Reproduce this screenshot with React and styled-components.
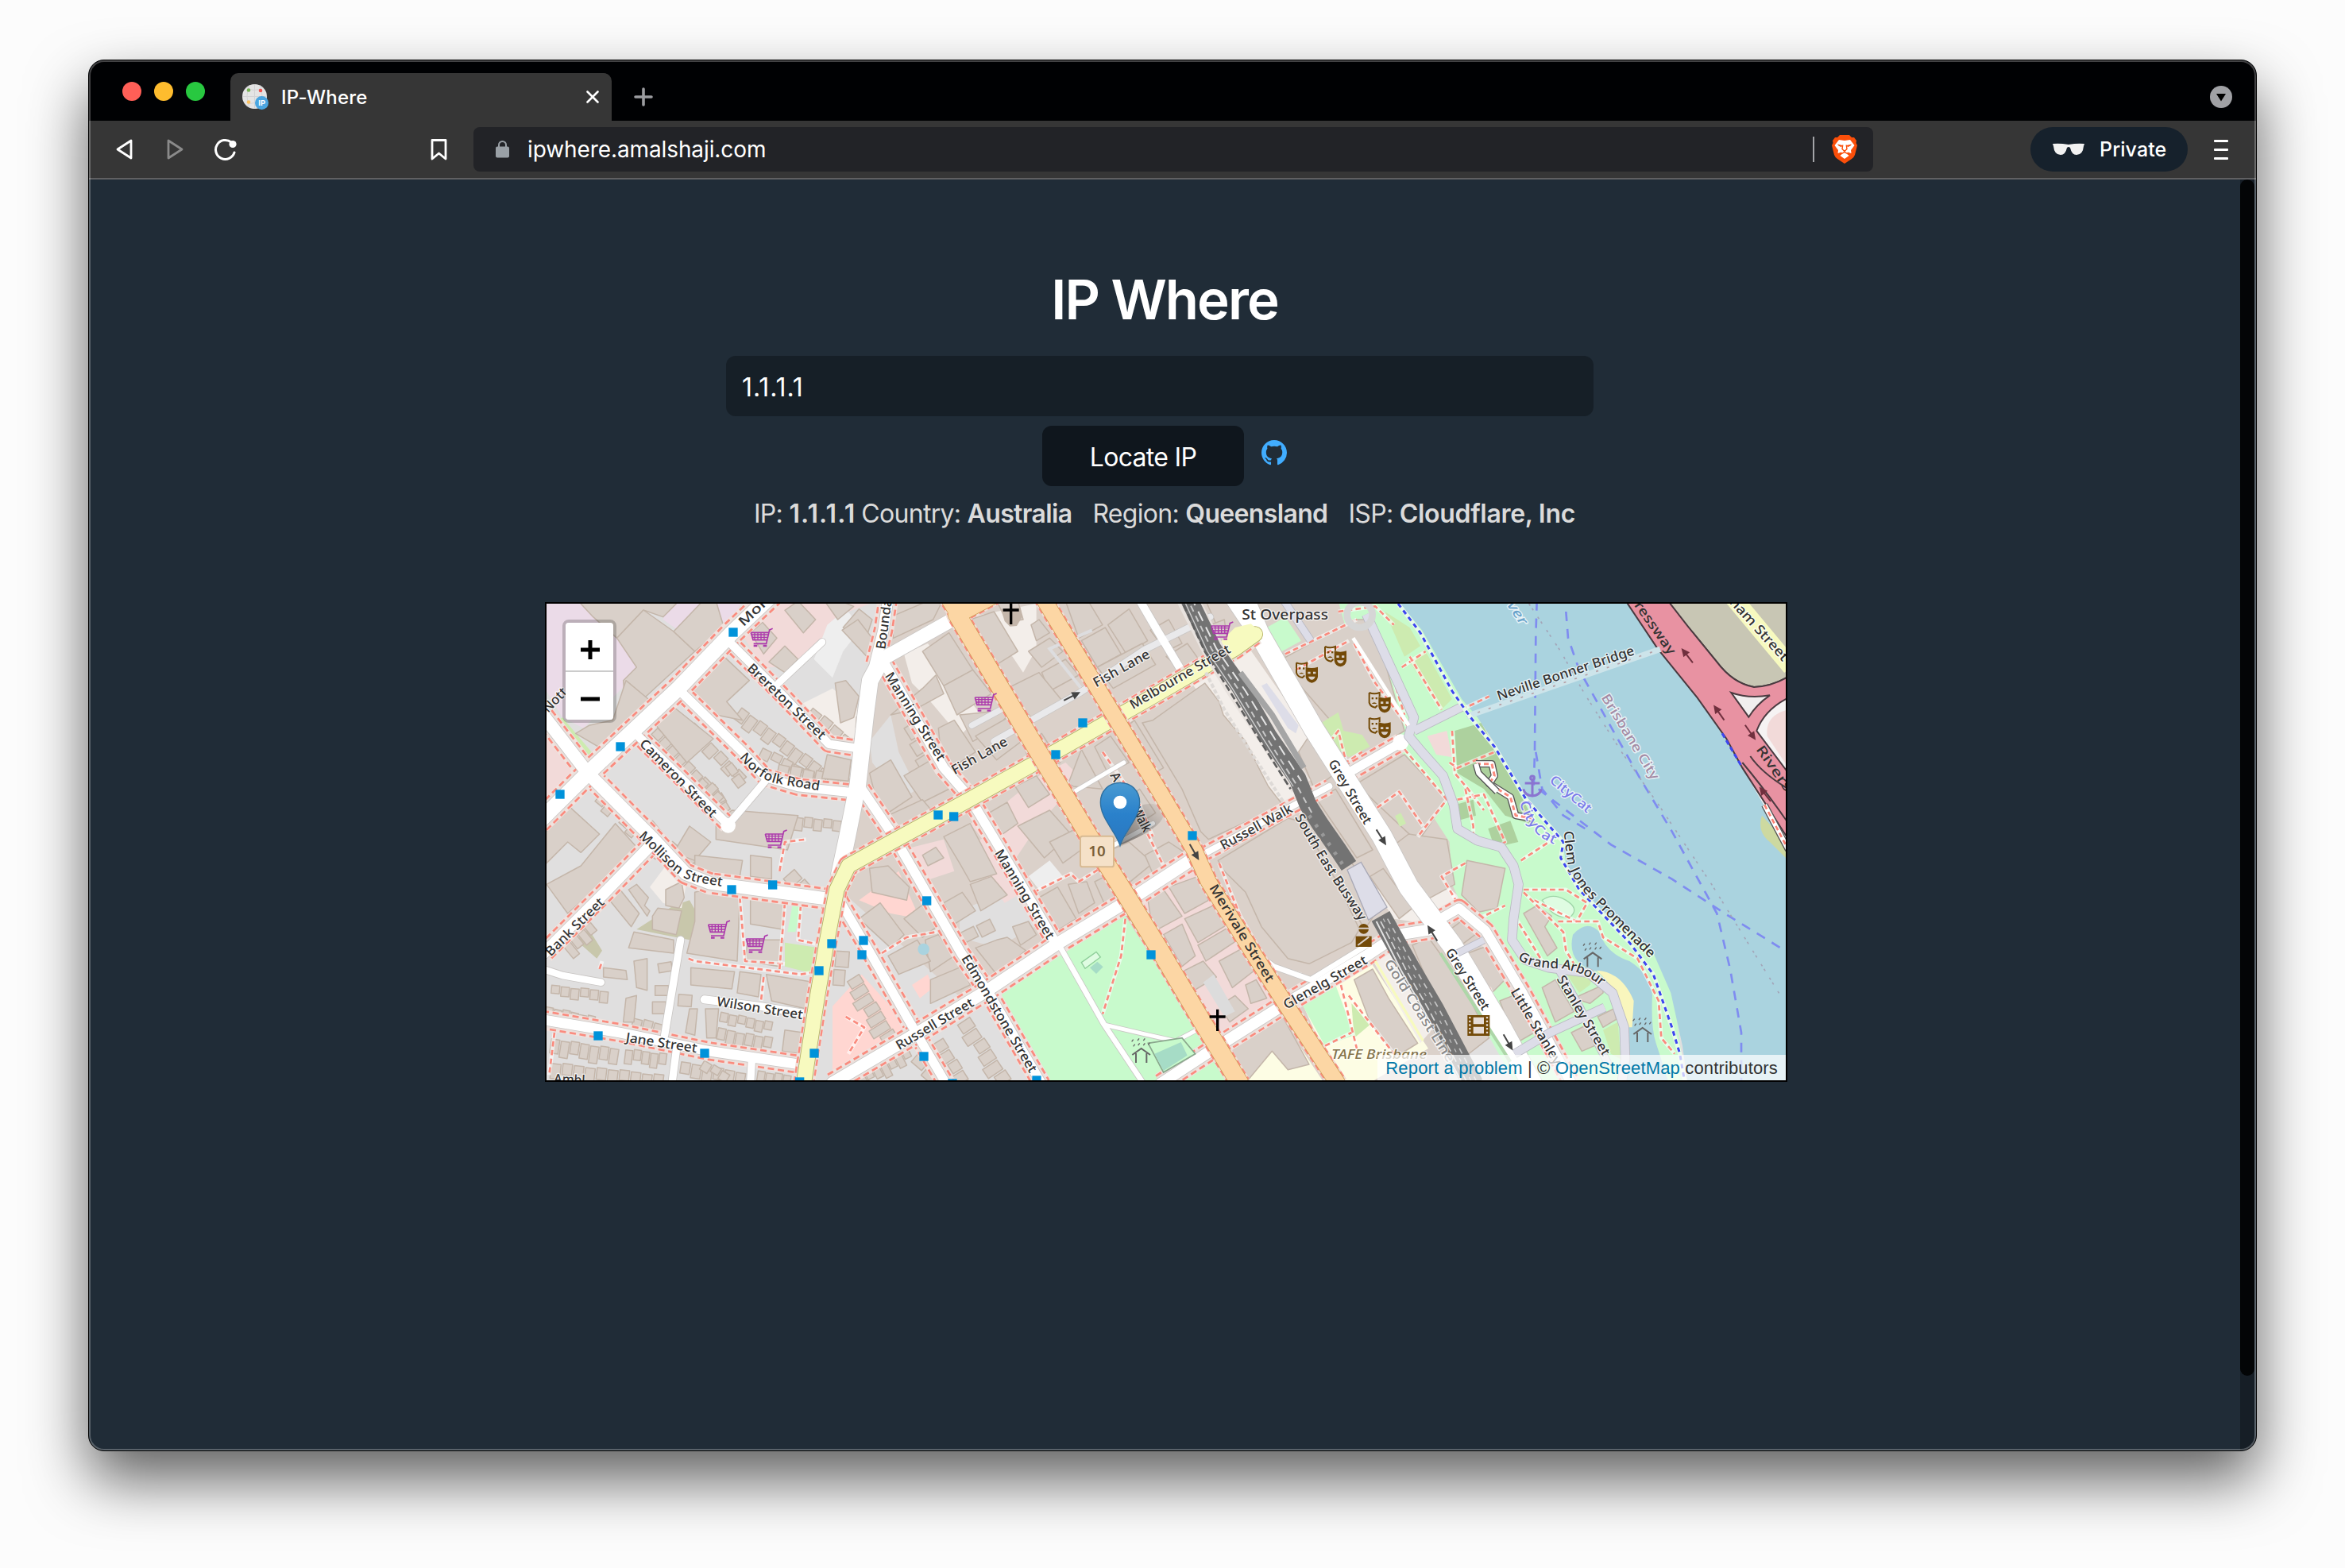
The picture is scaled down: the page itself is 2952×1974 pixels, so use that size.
import React from "react";
import styled, { createGlobalStyle } from "styled-components";

const Global = createGlobalStyle`
  * { box-sizing: border-box; }
  html, body { margin: 0; background: #fcfcfc; }
  body { font-family: Inter, "Liberation Sans", sans-serif; overflow: hidden; }
`;

/* ---------- window chrome ---------- */

const Desktop = styled.div`
  width: 2952px;
  height: 1974px;
  padding: 75px 0 0 111px;
`;

const Window = styled.div`
  position: relative;
  display: flex;
  flex-direction: column;
  width: 2730px;
  height: 1752px;
  border: 1px solid #000;
  border-radius: 20px;
  overflow: hidden;
  background: #202c37;
  box-shadow: 0 36px 76px rgba(0, 0, 0, 0.62);
  &::after {
    content: "";
    position: absolute;
    inset: 0;
    border: 2px solid rgba(255, 255, 255, 0.26);
    border-radius: 19px;
    pointer-events: none;
  }
`;

const TabStrip = styled.div`
  display: flex;
  align-items: flex-end;
  height: 76px;
  padding: 0 30px 0 42px;
  background: #000103;
`;

const Lights = styled.div`
  display: flex;
  gap: 16px;
  width: 136px;
  height: 49px;
`;

const Light = styled.span`
  width: 24px;
  height: 24px;
  border-radius: 50%;
  background: ${(p) => p.$color};
`;

const Tab = styled.div`
  display: flex;
  align-items: center;
  width: 480px;
  height: 60px;
  padding: 0 16px 0 15px;
  border-radius: 10px 10px 0 0;
  background: #363636;
`;

const TabTitle = styled.span`
  flex: 1;
  margin-left: 15px;
  color: #fff;
  font-size: 24px;
  font-weight: 500;
  letter-spacing: 0.25px;
`;

const NewTab = styled.div`
  display: flex;
  align-items: center;
  flex: 1;
  height: 60px;
  padding-left: 28px;
`;

const TabSearch = styled.div`
  display: flex;
  align-items: center;
  height: 60px;
`;

const Toolbar = styled.div`
  display: flex;
  align-items: center;
  height: 74px;
  padding: 0 35px 0 33px;
  border-bottom: 2px solid #606062;
  background: #363636;
`;

const NavButtons = styled.div`
  display: flex;
  align-items: center;
  gap: 37px;
  width: 397px;
`;

const BookmarkSlot = styled.div`
  display: flex;
  width: 54px;
`;

const AddressBar = styled.div`
  display: flex;
  align-items: center;
  width: 1762px;
  height: 56px;
  padding: 0 20px 0 28px;
  border-radius: 8px;
  background: #222327;
`;

const Address = styled.span`
  flex: 1;
  margin-left: 23px;
  color: #fff;
  font-size: 28px;
  letter-spacing: -0.1px;
`;

const AddressDivider = styled.span`
  width: 2px;
  height: 32px;
  margin-right: 22px;
  background: #a3a4a8;
`;

const PrivatePill = styled.div`
  display: flex;
  align-items: center;
  gap: 18px;
  width: 198px;
  height: 56px;
  margin-left: 198px;
  padding-left: 27px;
  border-radius: 28px;
  background: #16212c;
  color: #fff;
  font-size: 25px;
  font-weight: 500;
  letter-spacing: 0.1px;
`;

const Menu = styled.div`
  display: flex;
  flex-direction: column;
  gap: 8px;
  margin-left: 33px;
`;

const MenuBar = styled.span`
  width: 18px;
  height: 3px;
  border-radius: 1px;
  background: #fff;
`;

/* ---------- page ---------- */

const Viewport = styled.div`
  display: flex;
  flex: 1;
`;

const Page = styled.main`
  display: flex;
  flex-direction: column;
  align-items: center;
  width: 2708px;
  padding-top: 110px;
  color: #dbdbdb;
  font-size: 32px;
`;

const ScrollTrack = styled.div`
  width: 18px;
  background: #161e26;
`;

const ScrollThumb = styled.div`
  height: 1506px;
  border-radius: 9px;
  background: #030506;
`;

const Title = styled.h1`
  margin: 0;
  height: 84px;
  line-height: 82px;
  color: #fff;
  font-size: 69px;
  font-weight: 600;
  letter-spacing: -1.95px;
`;

const IpInput = styled.input`
  width: 1092px;
  height: 76px;
  margin: 28px 12px 0 0;
  padding: 2px 20px 0;
  border: 0;
  border-radius: 12px;
  outline: 0;
  background: #161f27;
  color: #fff;
  font: 400 32px Inter, "Liberation Sans", sans-serif;
  letter-spacing: 0.9px;
`;

const Actions = styled.div`
  display: flex;
  gap: 22px;
  margin-top: 12px;
`;

const LocateButton = styled.button`
  width: 254px;
  height: 76px;
  padding: 2px 0 0;
  border: 0;
  border-radius: 12px;
  background: #0f161d;
  color: #fff;
  font: 400 32px Inter, "Liberation Sans", sans-serif;
  letter-spacing: -0.7px;
`;

const RepoLink = styled.a`
  height: 32px;
  margin-top: 18px;
  color: #41adff;
`;

const Facts = styled.p`
  display: flex;
  height: 42px;
  margin: 14px 0 0;
  line-height: 42px;
  white-space: pre;
`;

const Fact = styled.span`
  margin-right: ${(p) => p.$gap || 0}px;
  letter-spacing: -0.7px;
  b { font-weight: 600; letter-spacing: ${(p) => p.$tracking || "-0.65px"}; }
`;

const MapFrame = styled.section`
  position: relative;
  width: 1564px;
  height: 604px;
  margin: 90px 0 0 4px;
  border: 2px solid #000;
  overflow: hidden;
`;

const ZoomControl = styled.div`
  position: absolute;
  left: 20px;
  top: 20px;
  display: flex;
  flex-direction: column;
  width: 68px;
  height: 130px;
  border: 4px solid rgba(0, 0, 0, 0.2);
  border-radius: 8px;
  background-clip: padding-box;
`;

const ZoomButton = styled.button`
  display: flex;
  align-items: center;
  justify-content: center;
  height: ${(p) => (p.$first ? 62 : 60)}px;
  padding: ${(p) => (p.$first ? "8px 0 0 1px" : "0 0 0 1px")};
  border: 0;
  border-bottom: ${(p) => (p.$first ? "2px solid #ccc" : "0")};
  border-radius: ${(p) => (p.$first ? "4px 4px 0 0" : "0 0 4px 4px")};
  background: #fff;
  color: #000;
`;

const Attribution = styled.div`
  position: absolute;
  right: 0;
  bottom: 0;
  height: 32px;
  padding: 0 10px;
  background: rgba(255, 255, 255, 0.7);
  color: #333;
  font-family: "Liberation Sans", Arial, sans-serif;
  font-size: 22px;
  letter-spacing: 0.15px;
  line-height: 33px;
  a { color: #0078a8; text-decoration: none; }
`;

const MapCanvas = styled.svg`
  display: block;
  text { font-family: "Noto Sans", "Open Sans", sans-serif; }
`;

/* ---------- map data: 3 units per screen pixel ---------- */

const STREETS = [
  { p: "506,1270 466,1510 446,1630", w: 28 },
  { p: "491,1680 474,1810", w: 28 },
  { p: "776,1710 770,1810", w: 28 },
  { p: "596,1495 800,1520 1000,1552", w: 30 },
  { p: "-20,1378 60,1404 206,1430", w: 26 },
  { p: "336,490 500,650 686,835", w: 32, walk: 1 },
  { p: "500,325 740,560 826,655 950,692 1190,717", w: 34, walk: 1 },
  { p: "826,670 686,835", w: 28 },
  { p: "686,140 900,355 1066,530 1190,548", w: 32, walk: 1 },
  { p: "876,300 1041,145", w: 26 },
  { p: "1290,-20 1272,100 1240,230", w: 40, walk: 1 },
  { p: "1276,225 1500,620 1596,730 1716,930 1916,1270", w: 36, walk: 1 },
  { p: "1936,1290 2106,1590 2256,1815", w: 20 },
  { p: "2106,1590 2256,1625 2376,1652 2456,1610", w: 15 },
  { p: "1190,700 1306,870 1376,990 1566,1320 1676,1480 1870,1815", w: 36, walk: 1 },
  { p: "1106,1120 1206,1290 1366,1570 1510,1815", w: 34, walk: 1 },
  { p: "386,920 216,1095 -10,1320", w: 42, walk: 1 },
  { p: "-20,1570 276,1620 616,1690 990,1745", w: 38, walk: 1 },
  { p: "1080,1810 1416,1612 1666,1460 1936,1280 2216,1110 2446,960", w: 46, walk: 1 },
  { p: "2446,965 2816,765 2956,690", w: 24, walk: 1 },
  { p: "1976,720 2180,600", w: 16 },
  { p: "2146,910 2256,850 2290,830", w: 16 },
  { p: "1606,460 1756,378", w: 22, c: "#e9e9eb" },
  { p: "1690,520 1796,460 2016,335 2256,175 2506,50", w: 24, c: "#e9e9eb" },
  { p: "2236,-20 2300,90 2390,240", w: 30 },
  { p: "2320,1812 2506,1690 2776,1520 3096,1330 3216,1250 3376,1225", w: 42, walk: 1 },
  { p: "2590,1240 2656,1300 2746,1370 2886,1420 3106,1285", w: 20 },
  { p: "3026,640 3226,525", w: 34, walk: 1 },
  { p: "3376,1190 3446,1150 3546,1235 3686,1470 3870,1810", w: 36, walk: 1 },
  { p: "-10,425 156,640 400,885 526,1020 616,1055 1100,1120", w: 48, walk: 1 },
  { p: "-30,825 156,640 500,318 700,110 880,-60", w: 58, walk: 1 },
  { p: "1720,-50 1516,70 1266,210", w: 52 },
  { p: "1266,210 1222,290 1205,420 1176,680 1136,880 1106,1020", w: 62 },
  { p: "2630,-30 2690,110 2896,470 3156,880 3256,1070 3420,1290 3600,1590 3720,1810", w: 76 },
  { p: "2586,-30 2680,110", w: 60 },
];

const YELLOWS = ["971,1815 1020,1500 1056,1290 1096,1080 1140,990 1266,920 1600,738 1956,540 2316,335 2600,170 2676,115"];
const ORANGES = [
  { p: "1700,-40 1550,40 1816,490 2056,890 2176,1080 2311,1300 2471,1570 2620,1815", w: 66 },
  { p: "1500,-40 1550,40", w: 50 },
  { p: "1870,-30 2136,410 2316,710 2446,930 2500,1050 2656,1300 2796,1520 2990,1815", w: 58 },
];

const LAVENDER = [
  { p: "3096,40 3276,430 3256,500 3306,560 3386,650 3426,760 3440,850 3516,895 3606,920 3652,990 3671,1060 3652,1190 3646,1270 3696,1345 3786,1375 3936,1395 4026,1470 4070,1600 4074,1720 4060,1815", w: 32 },
  { p: "3276,480 3456,390", w: 30 },
  { p: "2786,-10 2886,140", w: 26 },
  { p: "3816,1370 3900,1520 4010,1740", w: 26 },
  { p: "3656,1700 3790,1620 3996,1525", w: 30 },
  { p: "3440,1320 3540,1270", w: 24 },
];

/* rows of houses: x1 y1 x2 y2 count depth */
const HOUSES = [
  [420, 470, 690, 745, 9, 52], [560, 450, 760, 660, 6, 50], [230, 690, 600, 1000, 12, 90],
  [740, 390, 1080, 640, 10, 60], [820, 540, 1060, 660, 6, 44], [880, 600, 1160, 660, 6, 70],
  [20, 1440, 240, 1460, 6, 44], [0, 1520, 190, 1560, 6, 52], [20, 1640, 280, 1680, 7, 66],
  [300, 1680, 460, 1700, 5, 60], [20, 1730, 450, 1780, 10, 60], [510, 1730, 760, 1770, 6, 66],
  [650, 1600, 860, 1640, 6, 60], [660, 1540, 860, 1580, 6, 44], [800, 1760, 930, 1780, 4, 50],
  [330, 1560, 450, 1590, 3, 54], [60, 1290, 170, 1200, 4, 60], [420, 1360, 480, 1350, 1, 50],
  [410, 1440, 470, 1440, 1, 50], [400, 1500, 460, 1500, 1, 56], [500, 1470, 560, 1475, 1, 50],
  [1160, 1760, 1360, 1660, 7, 80], [1180, 1400, 1330, 1640, 7, 80], [1420, 1680, 1560, 1800, 3, 90],
  [1600, 1560, 1760, 1800, 6, 70], [1560, 1240, 1680, 1180, 2, 50], [940, 1000, 1010, 1080, 2, 60],
  [940, 800, 1120, 820, 5, 50], [700, 600, 760, 680, 2, 44], [120, 1110, 180, 1180, 2, 60],
  [1160, 560, 1170, 420, 3, 44], [640, 680, 700, 780, 3, 50], [600, 1720, 700, 1780, 3, 40],
  [1400, 440, 1500, 600, 3, 90], [1080, 1440, 1090, 1300, 2, 60], [1500, 1640, 1600, 1800, 4, 60],
  [640, 760, 560, 680, 3, 44], [1010, 390, 1170, 520, 4, 60],
];

/* larger footprints in the same units */
const BUILDINGS = [
  "120,-10 250,-10 500,-10 440,50 366,24 266,130 176,50", "266,130 366,24 480,105 560,180 300,420 290,290 340,240",
  "300,290 420,390 230,560 110,490 160,460 250,440", "480,105 590,-10 640,-10 670,90 560,180",
  "530,320 660,190 766,290 680,370 740,440 640,420", "410,455 480,390 630,510 530,600",
  "900,25 950,-10 1016,60 970,110", "1120,90 1180,20 1230,60 1200,150", "840,220 900,160 950,210 900,260",
  "770,110 815,70 870,130 820,190", "1050,-10 1110,-10 1160,10 1100,60",
  "0,860 90,770 200,870 130,940 80,900 0,980", "130,990 260,830 350,930 80,1170 0,1060",
  "480,940 540,840 620,900 560,970", "560,950 740,970 730,1030 560,1010", "640,830 700,780 950,800 910,930 640,890",
  "770,950 850,960 850,1040 770,1030", "560,1090 600,1080 730,1110 720,1350 530,1320 560,1200",
  "770,1100 900,1120 890,1230 770,1210", "760,1270 895,1270 880,1370 750,1350",
  "545,1375 710,1390 700,1455 545,1440", "730,1390 810,1400 800,1485 720,1470", "830,1400 1010,1430 980,1530 850,1500",
  "340,880 400,820 450,880 400,920", "230,1110 270,1070 350,1170 320,1220", "310,1080 340,1060 385,1110 370,1140 390,1160 380,1180",
  "400,1180 420,1150 510,1160 490,1250 400,1230", "330,1240 480,1270 480,1320 310,1300", "450,1080 510,1050 520,1110 500,1150 450,1140",
  "330,1350 380,1340 380,1460 340,1450", "215,1375 300,1385 305,1420 215,1410", "300,1490 340,1480 330,1580 290,1580",
  "540,1530 570,1530 560,1630 525,1620", "600,1530 650,1530 640,1640 605,1640", "900,1610 970,1620 960,1700 890,1690",
  "1060,570 1150,590 1140,670 1040,660", "1116,100 1176,60 1230,130 1210,200", "1300,50 1440,-10 1490,0 1460,60 1310,130",
  "1420,180 1520,110 1610,250 1500,310", "1300,420 1420,320 1470,270 1500,340 1390,400", "1500,310 1610,250 1680,340 1550,420",
  "1480,470 1540,440 1620,560 1530,620 1490,580", "1350,650 1470,580 1540,690 1420,750", "1220,640 1300,590 1380,730 1290,790 1240,720",
  "1290,800 1420,740 1470,800 1400,860 1310,850", "1560,420 1610,520 1700,470 1760,400", "1620,500 1760,420 1820,500 1700,590",
  "1600,60 1690,30 1780,180 1700,230", "1700,-10 1780,-10 1800,60 1740,70", "1830,80 1860,60 1900,110 1850,140",
  "1820,180 1900,130 1950,180 1870,240", "1870,260 1960,210 2010,270 1900,330", "1740,320 1860,260 1950,370 1830,430",
  "1960,-10 2040,-20 2100,80 2010,130", "2020,140 2110,90 2170,190 2080,240", "2120,80 2200,20 2270,140 2190,190",
  "2080,240 2250,150 2300,230 2140,320", "1800,530 1870,490 1940,600 1840,640", "1970,680 2020,550 2100,700 1990,690",
  "2070,540 2130,500 2200,600 2120,640", "2160,490 2220,440 2330,620 2260,660", "1770,690 1850,650 1900,720 1820,770",
  "1780,840 1900,780 1980,870 1880,960", "1900,900 2020,840 2060,900 1950,980", "1620,820 1740,750 1780,830 1680,900",
  "1500,880 1600,830 1700,1020 1600,1050 1560,980", "1600,1060 1680,1030 1740,1100 1640,1160", "1420,950 1470,920 1500,960 1440,990",
  "1350,1190 1430,1130 1500,1200 1420,1260", "1500,1130 1570,1090 1620,1160 1540,1210",
  "1180,1190 1260,1130 1350,1250 1300,1300", "1220,1000 1290,990 1370,1070 1360,1120 1230,1090",
  "1430,1270 1480,1250 1540,1330 1450,1390", "1290,1330 1400,1270 1450,1350 1330,1400", "1450,1420 1570,1370 1600,1440 1450,1510",
  "1620,1300 1700,1270 1740,1260 1810,1310 1700,1400", "1760,1220 1820,1200 1850,1250 1790,1290", "1860,1110 1930,1070 2000,1190 1920,1240",
  "1970,1060 2040,1050 2070,1130 2010,1170", "2070,1050 2110,1030 2150,1110 2110,1140", "2130,930 2200,900 2290,980 2180,1070",
  "2260,950 2350,900 2410,940 2290,1020", "2200,730 2240,700 2300,790 2240,830", "2270,1110 2330,1080 2400,1180 2290,1240",
  "2350,1070 2460,1030 2500,1120 2410,1170", "2330,1250 2400,1210 2450,1330 2400,1370", "2410,1190 2540,1130 2590,1200 2460,1280",
  "2400,1390 2480,1350 2530,1410 2430,1470", "2540,1350 2630,1300 2680,1380 2590,1450", "2460,1290 2580,1220 2610,1270 2490,1350",
  "2540,1520 2600,1480 2650,1530 2580,1580", "2640,1440 2680,1420 2720,1490 2660,1510",
  "2290,440 2486,300 2540,370 2556,420 2640,520 2700,640 2726,690 2780,760 2500,890 2470,860 2400,700 2250,450",
  "2536,970 2800,810 2880,830 3070,1230 3040,1280 2880,1360 2800,1340 2700,1220 2640,1090 2560,1010",
  "2850,820 2920,800 3150,1140 3090,1230", "2740,230 3050,60 3120,60 3240,480 3080,580 2960,440 2820,280",
  "2840,560 2880,500 2980,640 2900,700", "2910,740 2980,700 3120,930 3060,960", "3060,680 3240,570 3400,740 3290,900 3130,750",
  "3190,920 3256,870 3400,890 3430,1060 3320,1120", "3110,1030 3160,1000 3270,1150 3220,1190",
  "3270,1290 3330,1260 3460,1440 3560,1640 3470,1710 3400,1600", "3400,1240 3480,1180 3520,1240 3440,1300",
  "2580,1680 2780,1560 2880,1740 2800,1760 2740,1690 2640,1810 2600,1760", "3050,1420 3120,1380 3180,1490 3290,1660 3210,1710 3110,1580",
  "3476,970 3620,1000 3590,1150 3520,1165 3456,1100", "3690,1170 3740,1140 3796,1180 3770,1220 3816,1300 3780,1330",
  "3480,1320 3560,1290 3620,1420 3570,1470", "3600,1500 3650,1480 3730,1620 3660,1660", "3760,1450 3810,1420 3880,1540 3810,1580 3790,1530",
  "3880,1490 3990,1440 3990,1470 3940,1510", "3870,1620 3930,1590 3980,1660 3910,1690", "3970,1560 4030,1530 4040,1570 3990,1600",
  "2280,100 2350,60 2400,150 2340,180", "2440,30 2490,-10 2530,80 2480,100", "2340,200 2420,150 2470,220 2400,250",
  "2480,90 2560,60 2570,140 2520,180", "1090,300 1130,290 1180,350 1160,430 1110,450",
];

const LAND = [
  { c: "#ebdbe8", p: "0,-10 140,-10 370,230 140,470 60,430 0,330" },
  { c: "#ebdbe8", p: "460,-10 740,-10 700,60 540,130 440,60" },
  { c: "#f2dad9", p: "720,90 900,-10 1250,-10 1140,30 1000,200 960,240 820,240" },
  { c: "#eeeeee", p: "1010,210 1060,80 1130,20 1190,90 1120,180 1080,280" },
  { c: "#f3eeea", p: "960,380 1080,320 1180,400 1170,520 1080,500" },
  { c: "#f2dad9", p: "0,470 130,630 0,760" },
  { c: "#cdebb0", p: "60,430 170,560 160,590 40,440" },
  { c: "#f3eeea", p: "1350,190 1440,150 1640,420 1560,500 1450,370 1380,300" },
  { c: "#f3eeea", p: "1600,50 1850,0 1850,170 1800,260 1760,200" },
  { c: "#e0dfdf", p: "1220,520 1300,420 1330,560 1400,700 1340,740 1230,600" },
  { c: "#f2dad9", p: "1700,780 1860,650 1960,600 2060,700 1990,690 1860,830 1740,1010 1600,830" },
  { c: "#e0dfdf", p: "1560,1160 1800,1060 1880,1200 1700,1300 1560,1260" },
  { c: "#f3eeea", p: "2400,250 2620,120 2900,520 2850,600 2860,800 2740,720" },
  { c: "#c8c7ab", p: "340,1230 480,1140 540,1120 580,1190 540,1270 440,1250" },
  { c: "#c8c7ab", p: "110,1270 160,1230 210,1310 190,1340" },
  { c: "#f3eeea", p: "390,1070 450,990 530,1050 510,1150 440,1130" },
  { c: "#cdebb0", p: "900,1280 1030,1300 1020,1400 900,1370" },
  { c: "#c8facc", p: "930,1130 970,1130 940,1240 910,1240" },
  { c: "#ffd6d1", p: "1180,1120 1330,1010 1410,1190 1300,1170" },
  { c: "#f2dad9", p: "1380,920 1500,890 1540,1010 1420,1050" },
  { c: "#f2dad9", p: "1580,920 1660,880 1800,1090 1730,1130 1640,1010" },
  { c: "#eeeeee", p: "1820,1030 1900,970 1950,1030 1860,1080" },
  { c: "#ffd6d1", p: "1080,1520 1190,1400 1370,1600 1080,1790" },
  { c: "#ffd6d1", p: "1380,1440 1440,1400 1460,1450 1410,1490" },
  { c: "#c8facc", p: "1706,1475 1940,1320 2186,1180 2590,1815 1900,1815" },
  { c: "#f2dad9", p: "2256,1060 2450,980 2780,1500 2510,1650 2256,1230" },
  { c: "#fdfde4", p: "2560,1690 2770,1560 2940,1815 2640,1815" },
  { c: "#fdfde4", p: "2850,1500 3110,1350 3330,1680 3100,1815 2990,1815" },
  { c: "#c8facc", p: "2846,1500 2976,1430 3050,1630 2940,1670" },
  { c: "#cdebb0", p: "3040,1510 3110,1590 3050,1640" },
  { c: "#f3eeea", p: "3110,1330 3190,1290 3360,1590 3300,1660" },
  { c: "#f3eeea", p: "3130,1080 3370,1040 3450,1110 3330,1210 3200,1190" },
  { c: "#c8facc", p: "2720,90 2790,50 2850,140 2760,190" },
  { c: "#c8facc", p: "2990,-10 3220,-10 3310,90 3516,430 3660,660 3740,790 3846,910 3850,990 3960,1140 4176,1310 4256,1470 4300,1815 3660,1815 3540,1600 3470,1420 3560,1280 3470,1170 3420,1060 3410,900 3300,730 3230,560 3040,170" },
  { c: "#cdebb0", p: "3166,30 3260,90 3300,160 3240,200" },
  { c: "#cdebb0", p: "3260,220 3320,180 3420,360 3380,400" },
  { c: "#add19e", p: "3430,480 3530,450 3656,680 3740,840 3620,800 3540,700 3440,640" },
  { c: "#add19e", p: "3430,760 3500,740 3510,800 3440,820" },
  { c: "#add19e", p: "3556,850 3640,820 3670,900 3580,920" },
  { c: "#cdebb0", p: "3840,1380 3960,1390 3940,1440 3900,1470" },
  { c: "#cdebb0", p: "3990,1610 4046,1580 4056,1720 4020,1700" },
  { c: "#f2dad9", p: "3326,500 3400,480 3420,580 3360,570" },
];

const FOOTPATHS = [
  "730,1110 750,1350 900,1360", "536,1340 560,1350 960,1400 1020,1390", "900,1130 880,1380", "960,1140 950,1270 1040,1290",
  "820,1410 810,1500", "880,1010 900,900 980,890", "2186,1190 2170,1330 2100,1550", "1266,1320 1360,1260 1470,1240 1510,1210",
  "1840,1090 1980,1020 2010,1050 2090,1000", "2100,560 2240,760 2290,880", "2270,870 2330,990",
  "2540,980 2620,1180 2730,1370 2850,1400", "3000,1440 3060,1680", "3030,1480 3200,1700", "2940,1670 3040,1620",
  "2790,190 3060,60", "2830,250 3030,140", "2990,30 3130,10 3200,80", "3160,160 3240,420", "3230,240 3320,180",
  "3260,200 3380,400", "3050,150 3130,300 3250,460", "3240,550 3400,740 3290,880", "3110,790 3220,710 3310,840",
  "3420,480 3430,640 3480,700 3540,780", "3410,600 3440,620 3580,560", "3440,740 3540,720 3620,900 3590,920",
  "3690,1080 3850,1080 3930,1130 3890,1200 3730,1120", "3690,1090 3840,1240 3850,1310 3880,1360", "3656,1180 3760,1350",
  "3820,1200 3970,1200 3990,1260 4120,1340 4200,1500 4210,1640 4260,1700", "3680,970 3800,890", "3470,980 3380,1030 3440,1130",
  "3520,1190 3620,1140", "3560,1450 3620,1590", "3470,700 3500,840 3500,880", "2960,520 2990,480 3020,600 3080,560",
  "3456,400 3560,350", "1130,1560 1200,1600 1140,1700", "200,1380 210,1350", "30,1620 10,1780", "150,640 60,560 40,480",
];

const FERRY = ["3740,-10 3736,120 3732,560 3728,700", "3850,30 3858,130 3900,250 4000,430 4130,660 4250,860 4420,1170 4470,1380 4512,1620 4512,1815", "3746,700 4020,910 4250,1040 4450,1170 4660,1300", "3736,560 3760,700 3840,800 3940,860"];
const RIVERWALK = "3216,0 3300,110 3420,330 3490,430 3580,540 3700,740 3840,900 3830,960 3900,1080 4090,1280 4180,1400 4250,1600 4280,1700 4300,1815";

const LABELS = [
  ["Mon", "M732 76 L838 -24"], ["Brereton Street", "M766 235 L1050 506"], ["Cameron Street", "M361 520 L638 802"],
  ["Norfolk Road", "M741 570 Q800 645 870 662 L1036 690"], ["Nott", "M-6 402 L72 322"],
  ["Mollison Street", "M358 868 L470 976 Q520 1030 590 1038 L668 1052"], ["Bounda", "M1262 172 L1288 -22"],
  ["Manning Street", "M1291 263 L1496 592"], ["Manning Street", "M1706 932 L1908 1266"],
  ["Fish Lane", "M1533 632 L1740 514"], ["Fish Lane", "M2068 302 L2278 184"], ["Melbourne Street", "M2206 385 L2582 165"],
  ["St Overpass", "M2626 42 L2956 42"], ["Grey Street", "M2966 592 L3106 832"], ["Grey Street", "M3408 1306 L3552 1534"],
  ["Russell Walk", "M2548 916 L2816 768"], ["South East Busway", "M2840 798 L2950 986 L3088 1194"],
  ["Merivale Street", "M2516 1064 L2738 1428"], ["Glenelg Street", "M2786 1518 L3098 1340"],
  ["Edmondstone Street", "M1580 1330 L1842 1770"], ["Russell Street", "M1323 1672 L1612 1500"],
  ["Bank Street", "M4 1322 L212 1116"], ["Wilson Street", "M644 1502 L972 1554"], ["Jane Street", "M300 1638 L572 1680"],
  ["Ambl", "M28 1794 L150 1800"], ["Gold Coast Line", "M3176 1348 L3420 1730", "#8a8a8a"],
  ["TAFE Brisbane", "M2964 1702 L3328 1702", "#84744c", 1], ["Grand Arbour", "M3676 1326 Q3716 1362 3830 1360 Q3930 1376 3996 1434"],
  ["Little Stanley", "M3654 1456 L3824 1740"], ["Stanley Street", "M3828 1408 L4006 1706"],
  ["Clem Jones Promenade", "M3858 858 L3872 970 Q3896 1050 3966 1114 L4182 1330"],
  ["CityCat", "M3796 658 L3944 782", "#7b7bea"], ["CityCat", "M3692 745 Q3720 860 3816 894", "#7b7bea"],
  ["Neville Bonner Bridge", "M3591 350 L4110 174"], ["Brisbane City", "M3996 345 L4192 664", "#a48ca5"],
  ["ver", "M3640 -4 L3696 78", "#6aa3cb", 1], ["ressway", "M4120 -4 L4256 190"], ["ham Street", "M4478 -16 L4684 212"],
  ["Riversi", "M4580 540 L4706 722"], ["A", "M2142 640 L2160 672"], ["Walk", "M2226 772 L2272 862"],
];

const STOPS = [[705, 108], [279, 540], [51, 720], [2025, 450], [1923, 570], [1479, 798], [1538, 804], [2439, 876], [699, 1080], [854, 1062], [1077, 1284], [1029, 1386], [195, 1632], [597, 1698], [1011, 1698], [956, 1806], [1436, 1122], [1197, 1272], [1191, 1326], [1425, 1710], [1533, 1812], [1851, 1800], [2283, 1326]];
const CARTS = [[812, 127], [866, 888], [1658, 372], [2551, 102], [651, 1230], [794, 1284]];
const MASKS = [[2979, 198], [2871, 259], [3146, 372], [3146, 468]];
const ARROWS = [[1984, 350, -27], [3152, 882, 58], [2446, 938, 60], [3346, 1245, -122], [3631, 1656, 60], [4308, 196, -128], [4428, 412, -125], [4546, 486, 55], [4602, 720, -128]];

const houseRow = ([x1, y1, x2, y2, n, depth], r) => {
  const dx = (x2 - x1) / n, dy = (y2 - y1) / n, len = Math.hypot(dx, dy);
  const nx = -dy / len, ny = dx / len;
  return Array.from({ length: n }, (_, i) => {
    const a = ((i * 37 + r * 13) % 11) / 11, d = depth * (0.65 + a * 0.35), s = a * 8;
    const ax = x1 + dx * i + nx * s, ay = y1 + dy * i + ny * s;
    const bx = ax + dx * 0.84, by = ay + dy * 0.84;
    return `${ax},${ay} ${bx},${by} ${bx + nx * d},${by + ny * d} ${ax + nx * d},${ay + ny * d}`;
  });
};

const pathLength = (d) => {
  const el = document.createElementNS("http://www.w3.org/2000/svg", "path");
  el.setAttribute("d", d);
  return el.getTotalLength();
};

const Cart = ({ x, y }) => (
  <g transform={`translate(${x - 42} ${y - 36})`} fill="none" stroke="#ac39ac" strokeWidth="5">
    <path d="M84 3 L72 8 L60 60 H12 M2 18 L10 46 H62 M2 18 H70" />
    <path d="M4 26 H68 M6 36 H66 M16 18 V46 M28 18 V46 M40 18 V46 M52 18 V46" strokeWidth="4" />
    <path d="M12 68 H26 M48 68 H62" strokeWidth="7" />
  </g>
);

const Mask = ({ x, y }) => (
  <g transform={`translate(${x - 42} ${y - 40})`} fill="#734a08">
    <path d="M3 4 Q22 12 42 4 V20 M3 4 V42 Q8 58 26 60 L34 52" fill="none" stroke="#734a08" strokeWidth="6" />
    <rect x="12" y="22" width="7" height="7" /><rect x="27" y="22" width="7" height="7" /><path d="M12 46 q10 -10 20 0z" />
    <path d="M38 20 Q60 28 84 20 V58 Q80 78 61 80 Q42 78 38 58Z" />
    <path d="M46 38 H56 V46 H46Z M66 38 H76 V46 H66Z M48 56 H74 Q70 68 61 68 Q52 68 48 56Z" fill="#d9d0c9" />
  </g>
);

const Shelter = ({ x, y }) => (
  <g transform={`translate(${x} ${y})`} fill="none" stroke="#666" strokeWidth="6">
    <path d="M-34 2 L0 -22 L34 2 M-20 -4 V32 M20 -4 V32" />
    <path d="M-30 -30 l6 -8 M-12 -34 l6 -8 M8 -34 l6 -8 M26 -36 l6 -8 M-36 -48 l6 -8 M-14 -52 l6 -8 M8 -52 l6 -8" strokeWidth="4" />
  </g>
);

const Line = ({ p, ...rest }) => <polyline points={p} fill="none" strokeLinejoin="round" {...rest} />;

function CityMap() {
  return (
    <MapCanvas width="1560" height="600" viewBox="0 0 4680 1800">
      <defs>
        <linearGradient id="pin" x1="0" y1="0" x2="0" y2="1">
          <stop offset="0" stopColor="#4a9bd2" /><stop offset="0.5" stopColor="#2a81cb" /><stop offset="1" stopColor="#2a77bf" />
        </linearGradient>
        <linearGradient id="shade" x1="0" y1="1" x2="1" y2="0">
          <stop offset="0" stopColor="#000" stopOpacity="0.6" /><stop offset="1" stopColor="#000" stopOpacity="0" />
        </linearGradient>
        {LABELS.map(([, d], i) => <path key={i} id={`label-${i}`} d={d} />)}
      </defs>
      <rect width="4680" height="1800" fill="#e0dfdf" />
      <polygon points="1250,0 3000,0 3560,1180 3400,1815 2500,1815 1960,1290 1600,1520 1130,1100 1250,230" fill="#dbd1ca" />
      {LAND.map((a, i) => <polygon key={i} points={a.p} fill={a.c} />)}
      <g fill="#d9d0c9" stroke="#c4b6aa" strokeWidth="4.5" strokeLinejoin="round">
        {HOUSES.flatMap(houseRow).map((p, i) => <polygon key={i} points={p} />)}
        {BUILDINGS.map((p, i) => <polygon key={i} points={p} />)}
      </g>
      <g fill="#cdebb0">
        <polygon points="2926,450 2990,410 3010,480 3080,495 3110,540 3030,580 2980,540" />
        <polygon points="3204,802 3226,790 3246,830 3222,842" />
      </g>
      <polyline points="2020,320 1900,170 2060,100" fill="none" stroke="#dddddf" strokeWidth="12" />
      <polygon points="2480,1430 2520,1400 2600,1540 2560,1560" fill="#dcdcdc" />
      <circle cx="1424" cy="1305" r="22" fill="#aad3df" />

      <path d="M3216 -10 L3306 100 L3456 360 L3516 430 L3576 520 L3656 660 L3746 800 L3836 890 L3852 990 L3966 1140 L4176 1310 L4246 1470 L4290 1670 L4310 1815 H4700 V-10Z" fill="#aad3df" />
      <path d="M3876 1250 Q3930 1190 3976 1240 Q4000 1320 4090 1350 Q4170 1400 4176 1480 Q4170 1600 4190 1660 L4240 1815 H4080 V1600 Q4060 1480 3970 1390 Q3850 1360 3876 1250Z" fill="#aad3df" />
      <path d="M3966 1385 Q4060 1390 4106 1500 L4100 1600 H4076 Q4060 1470 3966 1385Z" fill="#f9f6bd" />
      <path d="M3760 1120 q40 -30 90 0 q50 30 20 60 q-60 20 -110 -60z" fill="#dffce2" stroke="#9fd6a8" strokeWidth="4" />
      <path d="M4076 -10 L4196 170 L4356 360 L4456 510 L4516 620 L4690 920 V-10Z" fill="#f6f3f3" />
      <path d="M4230 -10 Q4270 60 4330 110 L4420 220 Q4480 300 4560 315 Q4630 312 4690 275 V-10Z" fill="#c8c6b4" stroke="#444" strokeWidth="6" />
      <Line p="4450,-60 4700,240" stroke="#f7fabf" strokeWidth="66" />
      <path d="M4690 400 Q4600 420 4610 500 L4690 620Z" fill="#f2dad9" />
      <g stroke="#4a3a40" strokeWidth="6" fill="#e892a2">
        <path d="M4076 -10 L4196 170 L4346 355 L4456 510 L4516 620 L4690 890 V640 L4570 480 Q4600 400 4690 355 V275 Q4630 312 4560 315 Q4480 300 4420 220 L4310 85 L4236 -10Z" />
        <path d="M4474 336 Q4540 360 4620 346 Q4570 380 4540 428Z" fill="#f1eeee" />
        <path d="M4546 576 Q4590 640 4690 700" fill="none" />
        <path d="M4516 600 Q4600 700 4690 830" fill="none" />
      </g>
      <path d="M4590 800 Q4570 860 4620 900 L4680 960 V900Z" fill="#cdd9a0" />
      <Line p="4600,760 4690,930" stroke="#555" strokeWidth="26" />
      <Line p="4600,760 4690,930" stroke="#fff" strokeWidth="18" />
      <Line p="4600,760 4690,930" stroke="#fa8072" strokeWidth="8" strokeDasharray="18 12" />
      <Line p="4440,490 4512,612" stroke="#3d46f0" strokeWidth="9" strokeDasharray="18 12" />

      {FOOTPATHS.map((p, i) => (
        <g key={i}>
          <Line p={p} stroke="#fff" strokeOpacity="0.6" strokeWidth="15" />
          <Line p={p} stroke="#fa8b7e" strokeWidth="8" strokeDasharray="20 13" />
        </g>
      ))}
      {STREETS.filter((s) => s.walk).map((s, i) => (
        <g key={i}>
          <Line p={s.p} stroke="#f0e2de" strokeWidth={s.w + 40} />
          <Line p={s.p} stroke="#fa8b7e" strokeWidth={s.w + 34} strokeDasharray="24 14" />
          <Line p={s.p} stroke="#ebe0dc" strokeWidth={s.w + 18} />
        </g>
      ))}
      {STREETS.map((s, i) => <Line key={i} p={s.p} stroke="#c9c6c4" strokeWidth={s.w + 5} strokeLinecap="round" />)}
      <circle cx="686" cy="838" r="28" fill="#fff" /><circle cx="3226" cy="523" r="30" fill="#fff" />
      {STREETS.map((s, i) => <Line key={i} p={s.p} stroke={s.c || "#fff"} strokeWidth={s.w} strokeLinecap="round" />)}

      {LAVENDER.map((s, i) => <Line key={i} p={s.p} stroke="#b9b9c2" strokeWidth={s.w + 5} />)}
      {LAVENDER.map((s, i) => <Line key={i} p={s.p} stroke="#dddde8" strokeWidth={s.w} />)}
      <Line p="3046,130 3256,460" stroke="#fff" strokeWidth="14" />
      <circle cx="3071" cy="42" r="48" fill="none" stroke="#d6d6d6" strokeWidth="26" />
      <Line p="3376,1320 3640,1730" stroke="#add7a8" strokeWidth="12" />
      <polygon points="2700,310 2720,300 2840,460 2830,490 2800,470" fill="#dddde8" />

      {YELLOWS.map((p) => (
        <g key={p}>
          <Line p={p} stroke="#efe2dc" strokeWidth="84" />
          <Line p={p} stroke="#fa8b7e" strokeWidth="80" strokeDasharray="24 14" />
          <Line p={p} stroke="#e9ded8" strokeWidth="66" />
          <Line p={p} stroke="#b3ae62" strokeWidth="60" strokeLinecap="round" />
          <Line p={p} stroke="#f7fabf" strokeWidth="55" strokeLinecap="round" />
        </g>
      ))}
      <polygon points="2520,170 2600,90 2660,76 2700,110 2650,150" fill="#f7fabf" />
      {ORANGES.map((o) => <Line key={o.p} p={o.p} stroke="#f1dcd5" strokeWidth={o.w + 16} />)}
      {ORANGES.map((o) => <Line key={o.p} p={o.p} stroke="#fa8b7e" strokeWidth={o.w + 14} strokeDasharray="22 14" />)}
      {ORANGES.map((o) => <Line key={o.p} p={o.p} stroke="#c99a50" strokeWidth={o.w + 4} />)}
      {ORANGES.map((o) => <Line key={o.p} p={o.p} stroke="#fcd6a4" strokeWidth={o.w} />)}

      <g>
        <Line p="2415,-30 2516,170 2600,310 2726,500 2850,690" stroke="#e8e2de" strokeWidth="84" />
        <Line p="2420,-30 2516,170 2616,310 2726,500 2836,660 2876,760 2920,830 2990,930 3030,990" stroke="#737373" strokeWidth="66" />
        <Line p="2400,-30 2496,180 2590,320 2700,500 2820,690" stroke="#d0d0d0" strokeWidth="4" />
        <Line p="2432,-30 2530,170 2640,330 2750,510 2850,670" stroke="#e4e4e4" strokeWidth="6" strokeDasharray="40 26" />
        <Line p="2415,-30 2512,172 2610,320 2716,500 2830,680 2890,790" stroke="#c8c8c8" strokeWidth="6" strokeDasharray="24 18" />
        <Line p="2390,-30 2486,180 2580,330 2690,510 2810,700" stroke="#5f5f5f" strokeWidth="8" strokeDasharray="26 12" />
        <Line p="2620,260 2740,420 2860,620" stroke="#a5a5a5" strokeWidth="22" />
        <Line p="2880,800 2930,870 3010,990" stroke="#999" strokeWidth="14" strokeDasharray="12 30" />
        <Line p="3150,1180 3256,1370 3350,1530 3500,1815" stroke="#737373" strokeWidth="78" />
        <Line p="3150,1200 3250,1390 3330,1530 3480,1815" stroke="#d4d4d4" strokeWidth="5" strokeDasharray="30 14" />
        <Line p="3176,1190 3276,1370 3370,1530 3510,1800" stroke="#c4c4c4" strokeWidth="5" strokeDasharray="22 18" />
        <Line p="3160,1190 3262,1380 3350,1530 3496,1810" stroke="#bdbdbd" strokeWidth="4" strokeDasharray="14 26" />
        <Line p="3134,1200 3230,1390 3310,1530 3460,1815" stroke="#e2e2e2" strokeWidth="6" />
        <polygon points="3024,1005 3076,976 3174,1146 3104,1195" fill="#dddde8" stroke="#a9a9b6" strokeWidth="4" />
        <Line p="2490,260 2560,400 2660,560 2790,760" stroke="#dedad7" strokeWidth="12" strokeDasharray="16 8" />
        <Line p="3130,1350 3310,1650" stroke="#f7fabf" strokeWidth="10" />
      </g>

      {FERRY.map((p) => <Line key={p} p={p} stroke="#7f8cf0" strokeWidth="8" strokeDasharray="36 30" />)}
      <Line p="3710,0 3830,180 3920,340 4060,560 4200,760 4400,1060 4660,1480" stroke="#a3a5b8" strokeWidth="5" strokeDasharray="9 12 9 30" />
      <Line p="3476,425 4206,172" stroke="#cde4ea" strokeWidth="22" />
      <Line p="3476,425 4206,172" stroke="#b59fa5" strokeWidth="5" strokeDasharray="9 34" />
      <Line p={RIVERWALK} stroke="#e8fbe9" strokeWidth="16" />
      <Line p={RIVERWALK} stroke="#3d46f0" strokeWidth="9" strokeDasharray="17 15" />
      <Line p="3510,605 3570,605 3580,650 3560,680 3640,730 3660,800 3720,810" stroke="#555" strokeWidth="28" />
      <Line p="3510,605 3570,605 3580,650 3560,680 3640,730 3660,800 3720,810" stroke="#fff" strokeWidth="20" />
      <Line p="3510,605 3570,605 3580,650 3560,680 3640,730 3660,800 3720,810" stroke="#fa8b7e" strokeWidth="9" strokeDasharray="18 12" />
      <Line p="3510,605 3520,640 3590,710" stroke="#555" strokeWidth="26" />
      <Line p="3510,605 3520,640 3590,710" stroke="#fff" strokeWidth="18" />

      <polygon points="2020,1355 2076,1315 2092,1335 2034,1378" fill="#dffce2" stroke="#8fce9a" strokeWidth="4" />
      <polygon points="2052,1375 2080,1352 2102,1372 2076,1398" fill="#a6dcc6" />
      <polygon points="2272,1660 2400,1640 2450,1700 2330,1770" fill="#c8facc" stroke="#8aa78d" strokeWidth="5" />
      <polygon points="2296,1700 2396,1656 2420,1706 2330,1764" fill="#a6dcc6" />

      {ARROWS.map(([x, y, r]) => (
        <g key={`${x}-${y}`} transform={`translate(${x} ${y}) rotate(${r})`} fill={x > 4200 ? "#70303e" : "#444"}>
          <rect x="-34" y="-3" width="44" height="6" /><path d="M4 -15 L36 0 L4 15Z" />
        </g>
      ))}
      {STOPS.map(([x, y]) => <rect key={`${x}-${y}`} x={x - 17} y={y - 17} width="34" height="34" fill="#0092da" />)}
      {CARTS.map(([x, y]) => <Cart key={x} x={x} y={y} />)}
      {MASKS.map(([x, y]) => <Mask key={`${x}-${y}`} x={x} y={y} />)}
      <polygon points="1716,20 1790,14 1796,50 1776,84 1750,86 1730,66" fill="#c4b6aa" />
      <path d="M1754 -6 V78 M1724 24 H1784 M2534 1532 V1614 M2504 1560 H2564" stroke="#000" strokeWidth="10" fill="none" />
      <g transform="translate(3723 690)" fill="none" stroke="#8a74d0" strokeWidth="9">
        <circle cy="-32" r="7" /><path d="M0 -24 V34 M-28 -12 H28 M-34 10 Q-28 34 0 36 Q28 34 34 10" />
      </g>
      <g fill="#734a08">
        <circle cx="3086" cy="1228" r="19" />
        <rect x="3056" y="1256" width="60" height="40" />
        <path d="M3066 1226 H3106 M3064 1290 L3106 1258" stroke="#d9d0c9" strokeWidth="6" />
        <rect x="3478" y="1554" width="84" height="78" />
        <path d="M3500 1562 H3540 V1588 H3500Z M3500 1598 H3540 V1624 H3500Z" fill="#e6dcd6" />
        <path d="M3487 1560 V1630 M3552 1560 V1630" stroke="#e6dcd6" strokeWidth="7" strokeDasharray="7 7" />
      </g>
      <Shelter x={2246} y={1702} /><Shelter x={3951} y={1340} /><Shelter x={4139} y={1624} />

      {LABELS.map(([text, d, color, italic], i) => (
        <text key={i} fontSize={text === "St Overpass" ? 54 : 50} fontWeight="500" fill={color || "#333"} fontStyle={italic ? "italic" : "normal"} stroke={/ressway|Rivers|Merivale/.test(text) ? "none" : "#fff"} strokeOpacity="0.7" strokeWidth="8" strokeLinejoin="round" paintOrder="stroke" dy="17">
          <textPath href={`#label-${i}`} textLength={pathLength(d) - 4} lengthAdjust="spacingAndGlyphs">{text}</textPath>
        </text>
      ))}

      <rect x="2016" y="878" width="126" height="116" rx="8" fill="#f5e1c8" stroke="#d8ba92" strokeWidth="6" />
      <text x="2079" y="955" fontSize="56" fontWeight="600" textAnchor="middle" fill="#7a5f38">10</text>
      <path d="M2166 912 L2250 760 Q2320 740 2330 800 Q2320 850 2166 912Z" fill="url(#shade)" opacity="0.8" />
      <path d="M2166 914 C2150 860 2092 812 2092 750 C2092 706 2124 676 2166 676 C2208 676 2240 706 2240 750 C2240 812 2182 860 2166 914Z" fill="url(#pin)" stroke="#2e6f9f" strokeWidth="4" />
      <circle cx="2166" cy="750" r="25" fill="#fff" />
    </MapCanvas>
  );
}

/* ---------- small glyphs ---------- */

const Favicon = () => (
  <svg width="34" height="34" viewBox="0 0 34 34">
    <circle cx="15.5" cy="16.5" r="15.5" fill="#e4e4e4" />
    <path d="M15.5 1V32M0 16.5H31M5 5Q15 12 26 5M5 28Q15 21 26 28M9 2Q3 16 9 30M22 2Q28 16 22 30" stroke="#d3d3d5" fill="none" />
    <circle cx="8" cy="8.5" r="2.3" fill="#77b255" /><circle cx="23" cy="9" r="2.3" fill="#f0534f" /><circle cx="8" cy="23.5" r="2.3" fill="#fdc160" />
    <circle cx="24.5" cy="24.5" r="8.5" fill="#4aa5e0" />
    <text x="24.7" y="28" textAnchor="middle" fontSize="9.5" fontWeight="700" fill="#fff" fontFamily="Inter, sans-serif">IP</text>
  </svg>
);

const Brave = () => (
  <svg width="32" height="36" viewBox="0 0 32 36">
    <path d="M10 0H22L25 3L28 3L31 7L30.5 10L32 13L29 25Q28 28 25 30L16 36L7 30Q4 28 3 25L0 13L1.5 10L1 7L4 3L7 3Z" fill="#fb4f0a" />
    <path d="M9 6L16 7L23 6L28.5 13L24 19L24.5 23L20 21.5L19 23L21.5 26L16 30L10.5 26L13 23L12 21.5L7.5 23L8 19L3.5 13Z" fill="#fff" />
    <path d="M7 11.5L13.5 13L12 15.2L8.5 13.6ZM25 11.5L18.5 13L20 15.2L23.5 13.6Z" fill="#fb4f0a" />
    <path d="M13.8 12.5L13 17.5L16 20.5L19 17.5L18.2 12.5M10.5 24.6L16 21.4L21.5 24.6M16 20V22" fill="none" stroke="#fb4f0a" strokeWidth="1.4" />
  </svg>
);

const Octocat = () => (
  <svg width="32" height="32" viewBox="0 0 16 16" fill="currentColor">
    <path fillRule="evenodd" d="M8 0C3.58 0 0 3.58 0 8c0 3.54 2.29 6.53 5.47 7.59.4.07.55-.17.55-.38 0-.19-.01-.82-.01-1.49-2.01.37-2.53-.49-2.69-.94-.09-.23-.48-.94-.82-1.13-.28-.15-.68-.52-.01-.53.63-.01 1.08.58 1.23.82.72 1.21 1.87.87 2.33.66.07-.52.28-.87.51-1.07-1.78-.2-3.64-.89-3.64-3.95 0-.87.31-1.59.82-2.15-.08-.2-.36-1.02.08-2.12 0 0 .67-.21 2.2.82.64-.18 1.32-.27 2-.27.68 0 1.36.09 2 .27 1.53-1.04 2.2-.82 2.2-.82.44 1.1.16 1.92.08 2.12.51.56.82 1.27.82 2.15 0 3.07-1.87 3.75-3.65 3.95.29.25.54.73.54 1.48 0 1.07-.01 1.93-.01 2.2 0 .21.15.46.55.38A8.013 8.013 0 0016 8c0-4.42-3.58-8-8-8z" />
  </svg>
);

export default function App() {
  return (
    <Desktop>
      <Global />
      <Window>
        <TabStrip>
          <Lights>
            <Light $color="#ff5f57" />
            <Light $color="#febc2e" />
            <Light $color="#28c840" />
          </Lights>
          <Tab>
            <Favicon />
            <TabTitle>IP-Where</TabTitle>
            <svg width="16" height="16" viewBox="0 0 16 16" stroke="#fff" strokeWidth="2.6" strokeLinecap="round"><path d="M1.5 1.5L14.5 14.5M14.5 1.5L1.5 14.5" /></svg>
          </Tab>
          <NewTab>
            <svg width="24" height="24" viewBox="0 0 24 24" stroke="#9b9ca0" strokeWidth="3.6" strokeLinecap="round"><path d="M12 2V22M2 12H22" /></svg>
          </NewTab>
          <TabSearch>
            <svg width="28" height="28" viewBox="0 0 28 28"><circle cx="14" cy="14" r="14" fill="#a0a1a5" /><path d="M8 10H20L14 19.5Z" fill="#000" /></svg>
          </TabSearch>
        </TabStrip>
        <Toolbar>
          <NavButtons>
            <svg width="26" height="28" viewBox="0 0 26 28" fill="none" stroke="#fff" strokeWidth="2.8" strokeLinejoin="round"><path d="M20 3V25L3 14Z" /></svg>
            <svg width="24" height="28" viewBox="0 0 24 28" fill="none" stroke="#8a8a8a" strokeWidth="2.8" strokeLinejoin="round"><path d="M4 3V25L21 14Z" /></svg>
            <svg width="30" height="28" viewBox="0 0 30 28" fill="none" stroke="#fff" strokeWidth="3" strokeLinecap="round"><path d="M26 18A12 12 0 1 1 22 5" /><circle cx="24" cy="7.5" r="4.6" fill="#fff" stroke="none" /></svg>
          </NavButtons>
          <BookmarkSlot>
            <svg width="21" height="28" viewBox="0 0 21 28" fill="none" stroke="#fff" strokeWidth="2.8" strokeLinejoin="round"><path d="M2 2.5H19V26L10.5 19L2 26Z" /></svg>
          </BookmarkSlot>
          <AddressBar>
            <svg width="17" height="22" viewBox="0 0 17 22"><rect y="7.5" width="17" height="14" rx="2" fill="#9aa0a6" /><path d="M4 9V5.5A4.5 4.5 0 0 1 13 5.5V9" fill="none" stroke="#9aa0a6" strokeWidth="2" /></svg>
            <Address>ipwhere.amalshaji.com</Address>
            <AddressDivider />
            <Brave />
          </AddressBar>
          <PrivatePill>
            <svg width="42" height="16" viewBox="0 0 42 16" fill="#f2f2f2"><path d="M1 1Q10 0 21 2Q32 0 41 1L40 4Q39 15 31 15Q25 15 23 6Q21 4 19 6Q17 15 11 15Q3 15 2 4Z" /></svg>
            Private
          </PrivatePill>
          <Menu><MenuBar /><MenuBar /><MenuBar /></Menu>
        </Toolbar>
        <Viewport>
          <Page>
            <Title>IP Where</Title>
            <IpInput defaultValue="1.1.1.1" />
            <Actions>
              <LocateButton>Locate IP</LocateButton>
              <RepoLink><Octocat /></RepoLink>
            </Actions>
            <Facts>
              <Fact $gap={7} $tracking="1.1px">IP: <b>1.1.1.1</b></Fact>
              <Fact $gap={26}>Country: <b>Australia</b></Fact>
              <Fact $gap={26}>Region: <b>Queensland</b></Fact>
              <Fact $tracking="-0.3px">ISP: <b>Cloudflare, Inc</b></Fact>
            </Facts>
            <MapFrame>
              <CityMap />
              <ZoomControl>
                <ZoomButton $first aria-label="Zoom in">
                  <svg width="26" height="26" viewBox="0 0 26 26" stroke="#000" strokeWidth="5"><path d="M13 1V25M1 13H25" /></svg>
                </ZoomButton>
                <ZoomButton aria-label="Zoom out">
                  <svg width="26" height="26" viewBox="0 0 26 26" stroke="#000" strokeWidth="5"><path d="M1 17H25" /></svg>
                </ZoomButton>
              </ZoomControl>
              <Attribution>
                <a>Report a problem</a> | © <a>OpenStreetMap</a> contributors
              </Attribution>
            </MapFrame>
          </Page>
          <ScrollTrack><ScrollThumb /></ScrollTrack>
        </Viewport>
      </Window>
    </Desktop>
  );
}
